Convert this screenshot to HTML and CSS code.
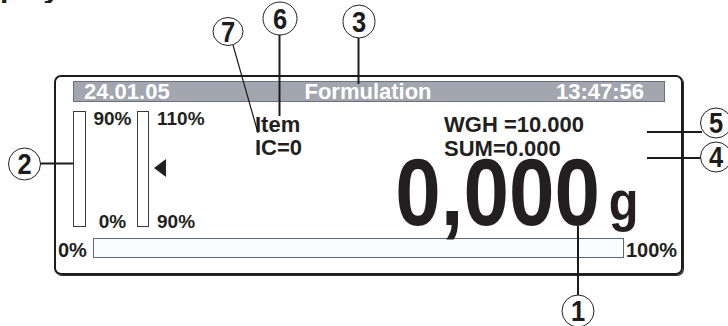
FILE: index.html
```html
<!DOCTYPE html>
<html>
<head>
<meta charset="utf-8">
<link rel="stylesheet" href="styles.css">
</head>
<body>
<div class="page">
  <div class="cut"><span>play</span></div>
  <div class="panel">
    <div class="header">
      <span class="h-left">24.01.05</span>
      <span class="h-mid">Formulation</span>
      <span class="h-right">13:47:56</span>
    </div>
    <div class="main">
      <div class="gauge g1">
        <div class="bar"></div>
        <div class="labels">
          <span>90%</span>
          <span>0%</span>
        </div>
      </div>
      <div class="gauge g2">
        <div class="bar"></div>
        <div class="labels">
          <span>110%</span>
          <i class="tri"></i>
          <span>90%</span>
        </div>
      </div>
      <div class="item">
        <div>Item</div>
        <div>IC=0</div>
      </div>
      <div class="weights">
        <div>WGH =10.000</div>
        <div>SUM=0.000</div>
        <div class="big"><span class="bignum">0,000<span class="unit">g</span></span></div>
      </div>
    </div>
    <div class="progress">
      <span class="plabel">0%</span>
      <div class="track"></div>
      <span class="plabel">100%</span>
    </div>
  </div>
  <svg class="callouts" width="728" height="326" viewBox="0 0 728 326">
    <g class="lines">
      <line class="thin" x1="233" y1="45" x2="258" y2="133"/>
      <line x1="279.5" y1="35" x2="279.5" y2="116"/>
      <line x1="358.5" y1="38" x2="358.5" y2="84"/>
      <line x1="40" y1="163.5" x2="73" y2="163.5"/>
      <line x1="647" y1="132" x2="702" y2="132"/>
      <line x1="647" y1="158" x2="702" y2="158"/>
      <line x1="578" y1="226" x2="578" y2="296"/>
    </g>
    <g class="bubbles">
      <ellipse cx="228" cy="31.5" rx="15" ry="14"/>
      <ellipse cx="280" cy="18.5" rx="17" ry="16.5"/>
      <ellipse cx="359" cy="21.5" rx="16" ry="16.5"/>
      <ellipse cx="24.5" cy="164" rx="16" ry="16"/>
      <ellipse cx="716" cy="123" rx="15.5" ry="15"/>
      <ellipse cx="716" cy="157" rx="15.5" ry="15"/>
      <ellipse cx="578" cy="311" rx="16" ry="16"/>
    </g>
    <g class="nums">
      <text x="228" y="42">7</text>
      <text x="280" y="29.5">6</text>
      <text x="359" y="32">3</text>
      <text x="24.5" y="174.5">2</text>
      <text x="716" y="133.5">5</text>
      <text x="716" y="167.5">4</text>
      <text x="578" y="321.5">1</text>
    </g>
  </svg>
</div>
</body>
</html>
```

FILE: styles.css
```css
* { box-sizing: border-box; }

html, body {
  margin: 0;
  padding: 0;
  background: #ffffff;
}

body {
  font-family: "Liberation Sans", Arial, sans-serif;
  font-weight: bold;
  color: #231f20;
}

.page {
  position: relative;
  width: 728px;
  height: 326px;
  overflow: hidden;
}

.cut {
  height: 3px;
  overflow: hidden;
  display: flex;
  align-items: flex-end;
}

.cut span {
  font-size: 30px;
  line-height: 31px;
  flex: none;
}

.panel {
  margin: 72px 0 0 54px;
  width: 629px;
  height: 200px;
  border: 2px solid #1d1b1c;
  border-radius: 7px;
  box-shadow: 1px 1px 0 #2a2a2a;
  display: flex;
  flex-direction: column;
}

.header {
  margin: 4px 16px 0 17px;
  height: 21px;
  background: #a2a7af;
  border: 1px solid #6a7079;
  color: #ffffff;
  font-size: 22px;
  line-height: 19px;
  display: grid;
  grid-template-columns: 1fr auto 1fr;
  padding: 0 20px 0 10px;
  white-space: nowrap;
}

.h-mid { padding-left: 8px; }
.h-right { text-align: right; }

.main {
  height: 136px;
  margin-left: 17px;
  display: grid;
  grid-template-columns: 64px 118px 189px 1fr;
}

.gauge {
  display: flex;
  align-items: flex-start;
}

.bar {
  margin-top: 9px;
  height: 116px;
  border: 1px solid #3a3a3a;
  background: #fff;
}

.g1 .bar { width: 13px; }
.g2 .bar { width: 12px; }

.labels {
  margin-top: 7px;
  height: 122px;
  display: flex;
  flex-direction: column;
  justify-content: space-between;
  font-size: 19px;
  line-height: 19px;
}

.g1 .labels {
  flex: 1;
  align-items: center;
  padding-left: 2px;
}

.g2 .labels {
  align-items: flex-start;
  padding-left: 8px;
}

.tri {
  display: block;
  width: 0;
  height: 0;
  margin-left: -3px;
  margin-bottom: 4px;
  border-top: 9.5px solid transparent;
  border-bottom: 9.5px solid transparent;
  border-right: 12px solid #231f20;
}

.item {
  padding-top: 11px;
  font-size: 22px;
  line-height: 23px;
}

.weights {
  padding-top: 11px;
  font-size: 22px;
  line-height: 24px;
  display: flex;
  flex-direction: column;
  align-items: flex-start;
  min-width: 0;
}

.big {
  align-self: stretch;
  margin: -3px 43px 0 -100px;
  display: flex;
  justify-content: flex-end;
  font-size: 94px;
  line-height: 70px;
  white-space: nowrap;
}

.bignum {
  display: block;
  flex: none;
  transform: scaleX(0.87);
  transform-origin: right center;
}

.unit {
  font-size: 56px;
  margin-left: 10px;
  vertical-align: 5px;
}

.progress {
  margin-left: 2px;
  display: flex;
  align-items: flex-start;
}

.plabel {
  margin-top: 2px;
  font-size: 20px;
  line-height: 20px;
}

.track {
  margin-left: 6px;
  margin-right: 2px;
  width: 531px;
  height: 20px;
  border: 1px solid #5b6a79;
  background: #fbfcfd;
}

.callouts {
  position: absolute;
  left: 0;
  top: 0;
  overflow: visible;
}

.lines line {
  stroke: #1d1b1c;
  stroke-width: 2;
}

.lines line.thin { stroke-width: 1.2; }

.bubbles ellipse {
  fill: #ffffff;
  stroke: #231f20;
  stroke-width: 1;
}

.nums text {
  font-family: "Liberation Sans", sans-serif;
  font-weight: bold;
  font-size: 30px;
  fill: #1d1b1c;
  text-anchor: middle;
  transform-box: fill-box;
  transform-origin: center;
  transform: scaleX(0.85);
}
```
